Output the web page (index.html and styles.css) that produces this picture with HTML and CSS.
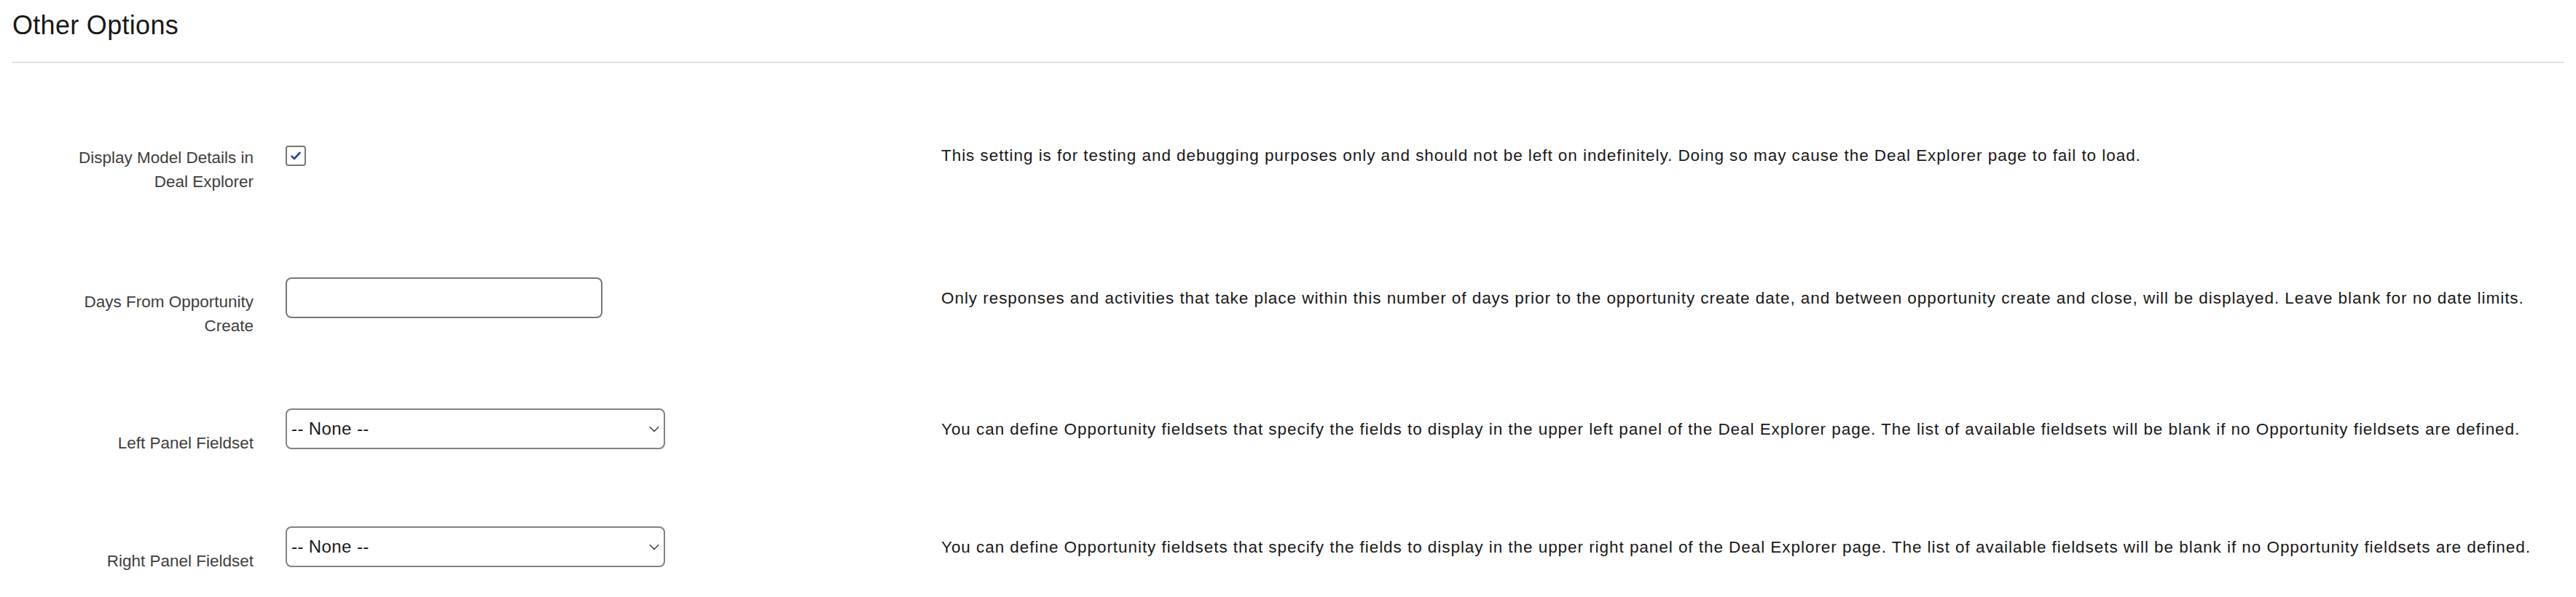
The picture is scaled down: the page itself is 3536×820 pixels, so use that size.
FILE: index.html
```html
<!DOCTYPE html>
<html lang="en">
<head>
<meta charset="utf-8">
<title>Other Options</title>
<link rel="stylesheet" href="styles.css">
</head>
<body>
<div class="page">
  <h1 class="title">Other Options</h1>
  <div class="divider"></div>
  <div class="rows">
    <div class="row row-check">
      <div class="label">Display Model Details in Deal Explorer</div>
      <div class="field">
        <div class="control">
          <span class="checkbox">
            <svg width="14" height="12" viewBox="0 0 14 12"><path d="M1.5 6.6 L5 10 L12.5 1.8" fill="none" stroke="#2b3f9f" stroke-width="2.6" stroke-linecap="round" stroke-linejoin="round"/></svg>
          </span>
        </div>
        <div class="desc">This setting is for testing and debugging purposes only and should not be left on indefinitely. Doing so may cause the Deal Explorer page to fail to load.</div>
      </div>
    </div>
    <div class="row row-input">
      <div class="label">Days From Opportunity Create</div>
      <div class="field">
        <div class="control"><input class="text-input" type="text" value=""></div>
        <div class="desc">Only responses and activities that take place within this number of days prior to the opportunity create date, and between opportunity create and close, will be displayed. Leave blank for no date limits.</div>
      </div>
    </div>
    <div class="row row-select">
      <div class="label">Left Panel Fieldset</div>
      <div class="field">
        <div class="control">
          <div class="select"><span class="select-value">-- None --</span>
            <svg class="chevron" width="14" height="9" viewBox="0 0 14 9"><path d="M1.2 1.5 L7 7.5 L12.8 1.5" fill="none" stroke="#444" stroke-width="1.5" stroke-linecap="round" stroke-linejoin="round"/></svg>
          </div>
        </div>
        <div class="desc">You can define Opportunity fieldsets that specify the fields to display in the upper left panel of the Deal Explorer page. The list of available fieldsets will be blank if no Opportunity fieldsets are defined.</div>
      </div>
    </div>
    <div class="row row-select row-last">
      <div class="label">Right Panel Fieldset</div>
      <div class="field">
        <div class="control">
          <div class="select"><span class="select-value">-- None --</span>
            <svg class="chevron" width="14" height="9" viewBox="0 0 14 9"><path d="M1.2 1.5 L7 7.5 L12.8 1.5" fill="none" stroke="#444" stroke-width="1.5" stroke-linecap="round" stroke-linejoin="round"/></svg>
          </div>
        </div>
        <div class="desc">You can define Opportunity fieldsets that specify the fields to display in the upper right panel of the Deal Explorer page. The list of available fieldsets will be blank if no Opportunity fieldsets are defined.</div>
      </div>
    </div>
  </div>
</div>
</body>
</html>
```

FILE: styles.css
```css
html, body {
  margin: 0;
  padding: 0;
  background: #ffffff;
}

body {
  font-family: "Liberation Sans", Arial, sans-serif;
  color: #181818;
  overflow: hidden;
}

.page {
  padding: 0 17px;
}

.title {
  margin: 0;
  padding-top: 13px;
  font-size: 36px;
  line-height: 44px;
  font-weight: normal;
  letter-spacing: 0.3px;
  color: #181818;
}

.divider {
  margin-top: 28px;
  height: 1px;
  background: #c9c9c9;
}

.rows {
  margin-top: 111px;
}

.row {
  display: flex;
  align-items: flex-start;
}

.row-check {
  min-height: 184px;
}

.row-input {
  min-height: 180px;
}

.row-select {
  min-height: 162px;
}

.row-last {
  min-height: 0;
}

.label {
  flex: none;
  width: 260px;
  margin-left: 71px;
  margin-right: 44px;
  text-align: right;
  font-size: 22.5px;
  line-height: 33px;
  color: #3e3e3c;
}

.row-check .label {
  margin-top: 3px;
}

.row-input .label {
  margin-top: 17px;
}

.row-select .label {
  margin-top: 31px;
}

.field {
  flex: 1;
  display: flex;
  align-items: center;
}

.control {
  flex: none;
  width: 900px;
  display: flex;
}

.desc {
  font-size: 22.5px;
  line-height: 33px;
  letter-spacing: 0.95px;
  white-space: nowrap;
  color: #181818;
}

.checkbox {
  box-sizing: border-box;
  width: 28px;
  height: 28px;
  border: 2px solid #767676;
  border-radius: 4px;
  display: flex;
  align-items: center;
  justify-content: center;
  background: #fff;
}

.text-input {
  box-sizing: border-box;
  width: 435px;
  height: 56px;
  margin: 0;
  border: 2px solid #767676;
  border-radius: 8px;
  padding: 0 8px;
  font-family: inherit;
  font-size: 24px;
  background: #fff;
  outline: none;
}

.select {
  box-sizing: border-box;
  width: 521px;
  height: 56px;
  border: 2px solid #828282;
  border-radius: 8px;
  padding: 0 6px 0 6px;
  display: flex;
  align-items: center;
  justify-content: space-between;
  background: #fff;
}

.select-value {
  font-size: 24px;
  letter-spacing: 0.4px;
  color: #181818;
}

.chevron {
  display: block;
}
```
